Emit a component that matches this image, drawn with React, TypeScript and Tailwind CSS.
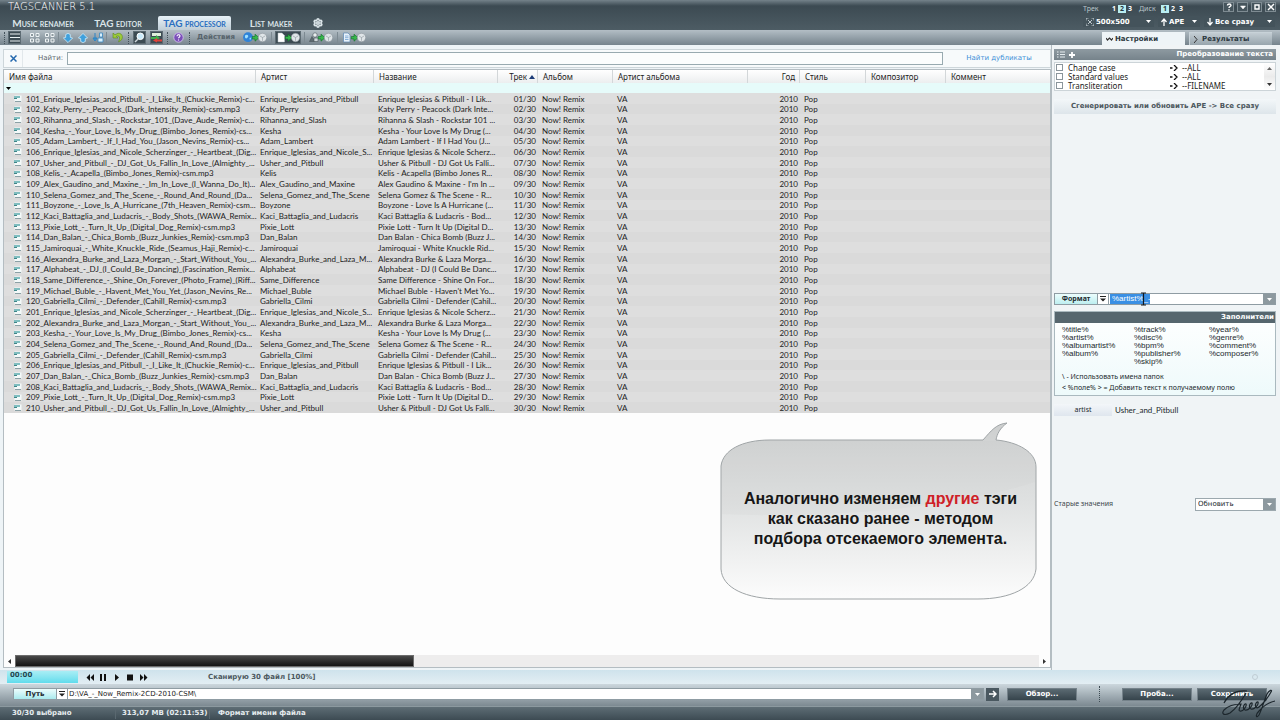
import type { ReactNode } from "react";
import { Settings } from "lucide-react";

const files: [string, string, string][] = [
  ["101_Enrique_Iglesias_and_Pitbull_-_I_Like_It_(Chuckie_Remix)-c...", "Enrique_Iglesias_and_Pitbull", "Enrique Iglesias & Pitbull - I Lik..."],
  ["102_Katy_Perry_-_Peacock_(Dark_Intensity_Remix)-csm.mp3", "Katy_Perry", "Katy Perry - Peacock (Dark Inte..."],
  ["103_Rihanna_and_Slash_-_Rockstar_101_(Dave_Aude_Remix)-c...", "Rihanna_and_Slash", "Rihanna & Slash - Rockstar 101 ..."],
  ["104_Kesha_-_Your_Love_Is_My_Drug_(Bimbo_Jones_Remix)-cs...", "Kesha", "Kesha - Your Love Is My Drug (..."],
  ["105_Adam_Lambert_-_If_I_Had_You_(Jason_Nevins_Remix)-cs...", "Adam_Lambert", "Adam Lambert - If I Had You (J..."],
  ["106_Enrique_Iglesias_and_Nicole_Scherzinger_-_Heartbeat_(Dig...", "Enrique_Iglesias_and_Nicole_S...", "Enrique Iglesias & Nicole Scherz..."],
  ["107_Usher_and_Pitbull_-_DJ_Got_Us_Fallin_In_Love_(Almighty_...", "Usher_and_Pitbull", "Usher & Pitbull - DJ Got Us Falli..."],
  ["108_Kelis_-_Acapella_(Bimbo_Jones_Remix)-csm.mp3", "Kelis", "Kelis - Acapella (Bimbo Jones R..."],
  ["109_Alex_Gaudino_and_Maxine_-_Im_In_Love_(I_Wanna_Do_It)...", "Alex_Gaudino_and_Maxine", "Alex Gaudino & Maxine - I'm In ..."],
  ["110_Selena_Gomez_and_The_Scene_-_Round_And_Round_(Da...", "Selena_Gomez_and_The_Scene", "Selena Gomez & The Scene - R..."],
  ["111_Boyzone_-_Love_Is_A_Hurricane_(7th_Heaven_Remix)-csm...", "Boyzone", "Boyzone - Love Is A Hurricane (..."],
  ["112_Kaci_Battaglia_and_Ludacris_-_Body_Shots_(WAWA_Remix...", "Kaci_Battaglia_and_Ludacris", "Kaci Battaglia & Ludacris - Bod..."],
  ["113_Pixie_Lott_-_Turn_It_Up_(Digital_Dog_Remix)-csm.mp3", "Pixie_Lott", "Pixie Lott - Turn It Up (Digital D..."],
  ["114_Dan_Balan_-_Chica_Bomb_(Buzz_Junkies_Remix)-csm.mp3", "Dan_Balan", "Dan Balan - Chica Bomb (Buzz J..."],
  ["115_Jamiroquai_-_White_Knuckle_Ride_(Seamus_Haji_Remix)-c...", "Jamiroquai", "Jamiroquai - White Knuckle Rid..."],
  ["116_Alexandra_Burke_and_Laza_Morgan_-_Start_Without_You_...", "Alexandra_Burke_and_Laza_M...", "Alexandra Burke & Laza Morga..."],
  ["117_Alphabeat_-_DJ_(I_Could_Be_Dancing)_(Fascination_Remix...", "Alphabeat", "Alphabeat - DJ (I Could Be Danc..."],
  ["118_Same_Difference_-_Shine_On_Forever_(Photo_Frame)_(Riff...", "Same_Difference", "Same Difference - Shine On For..."],
  ["119_Michael_Buble_-_Havent_Met_You_Yet_(Jason_Nevins_Re...", "Michael_Buble", "Michael Buble - Haven't Met Yo..."],
  ["120_Gabriella_Cilmi_-_Defender_(Cahill_Remix)-csm.mp3", "Gabriella_Cilmi", "Gabriella Cilmi - Defender (Cahil..."],
  ["201_Enrique_Iglesias_and_Nicole_Scherzinger_-_Heartbeat_(Dig...", "Enrique_Iglesias_and_Nicole_S...", "Enrique Iglesias & Nicole Scherz..."],
  ["202_Alexandra_Burke_and_Laza_Morgan_-_Start_Without_You_...", "Alexandra_Burke_and_Laza_M...", "Alexandra Burke & Laza Morga..."],
  ["203_Kesha_-_Your_Love_Is_My_Drug_(Bimbo_Jones_Remix)-cs...", "Kesha", "Kesha - Your Love Is My Drug (..."],
  ["204_Selena_Gomez_and_The_Scene_-_Round_And_Round_(Da...", "Selena_Gomez_and_The_Scene", "Selena Gomez & The Scene - R..."],
  ["205_Gabriella_Cilmi_-_Defender_(Cahill_Remix)-csm.mp3", "Gabriella_Cilmi", "Gabriella Cilmi - Defender (Cahil..."],
  ["206_Enrique_Iglesias_and_Pitbull_-_I_Like_It_(Chuckie_Remix)-c...", "Enrique_Iglesias_and_Pitbull", "Enrique Iglesias & Pitbull - I Lik..."],
  ["207_Dan_Balan_-_Chica_Bomb_(Buzz_Junkies_Remix)-csm.mp3", "Dan_Balan", "Dan Balan - Chica Bomb (Buzz J..."],
  ["208_Kaci_Battaglia_and_Ludacris_-_Body_Shots_(WAWA_Remix...", "Kaci_Battaglia_and_Ludacris", "Kaci Battaglia & Ludacris - Bod..."],
  ["209_Pixie_Lott_-_Turn_It_Up_(Digital_Dog_Remix)-csm.mp3", "Pixie_Lott", "Pixie Lott - Turn It Up (Digital D..."],
  ["210_Usher_and_Pitbull_-_DJ_Got_Us_Fallin_In_Love_(Almighty_...", "Usher_and_Pitbull", "Usher & Pitbull - DJ Got Us Falli..."],
];

const Caret = ({ className = "text-white" }: { className?: string }) => (
  <svg viewBox="0 0 5 3" className={`h-[3px] w-[5px] shrink-0 ${className}`} fill="currentColor">
    <path d="M0 0h5L2.5 3z" />
  </svg>
);

const Sep = () => <span className="h-3 w-px shrink-0 bg-[#7d8a92]" />;
const Dots = () => <span className="h-3 w-0 shrink-0 border-l border-dotted border-[#44525a]" />;

function Tool({ label, pressed, wide, children }: { label: string; pressed?: boolean; wide?: boolean; children: ReactNode }) {
  return (
    <button
      aria-label={label}
      className={`flex h-[13px] shrink-0 items-center justify-center ${wide ? "w-[26px]" : "w-[13px]"} ${pressed ? "border border-[#5d6b73] bg-[#3c4b53]" : ""}`}
    >
      {children}
    </button>
  );
}

const Grid = () => (
  <svg viewBox="0 0 10 10" className="h-[10px] w-[10px]" fill="#8c999f" stroke="#eef3f5" strokeWidth="1">
    <path d="M.5.5h3v3h-3zM6 .5h3v3H6zM.5 6h3v3h-3zM6 6h3v3H6z" />
  </svg>
);

const Diamond = ({ up }: { up?: boolean }) => (
  <svg viewBox="0 0 10 10" className="h-[10px] w-[10px]" fill="#3fa0dc" stroke="#cfeefc" strokeWidth=".8">
    <path d={up ? "M5 .4L9.600 5 7.300 5.600 7.300 8.500 5 9.600 2.700 8.500 2.700 5.600.4 5z" : "M5 9.600L.4 5 2.700 4.400 2.700 1.500 5 .4 7.300 1.500 7.300 4.400 9.600 5z"} />
  </svg>
);

function ToDisc({ source }: { source: "globe" | "page" | "shapes" | "doc" }) {
  return (
    <svg viewBox="0 0 24 11" className="h-[11px] w-6 shrink-0">
      {source === "globe" && (
        <g>
          <circle cx="5" cy="5.200" r="4.900" fill="#2f83d8" />
          <path d="M2 3.500c2-2 4 0 3 1.500s-2 2-3 .5zM6.500 6l2-.5L7 8.500z" fill="#9fe0ff" />
        </g>
      )}
      {source === "page" && <path d="M2 1h4l2.500 2.500V10H2z" fill="#fff" stroke="#b9c4c9" strokeWidth=".5" />}
      {source === "shapes" && (
        <g stroke="#4a555b" strokeWidth=".6">
          <circle cx="6" cy="3" r="2.200" fill="#e8edef" />
          <path d="M3 4.500L6 9.500H.5z" fill="#5d6a70" />
          <path d="M5 6h4v3.500H5z" fill="#cfd7da" />
        </g>
      )}
      {source === "doc" && (
        <g>
          <path d="M1.500 1h4.500l2 2v7H1.500z" fill="#e8f2fb" stroke="#5b87b3" strokeWidth=".7" />
          <path d="M3 4h3.500M3 5.700h3.500M3 7.500h3.500" stroke="#5b93c8" strokeWidth=".7" />
        </g>
      )}
      <path d="M9.300 4.500h2.700V2.200L16 5.700 12 9.200V7H9.300z" fill="#37b64c" stroke="#0f6d26" strokeWidth=".6" />
      <circle cx="19.500" cy="5.500" r="4.200" fill="#dfe5e8" stroke="#8b969c" strokeWidth=".6" />
      <path d="M17 4l2.500 1.500L22 4M19.500 5.500V8.800" stroke="#8b969c" strokeWidth=".6" fill="none" />
    </svg>
  );
}

function Toolbar() {
  return (
    <div className="flex h-[15px] items-center bg-linear-to-b from-[#b3bec5] to-[#76848d] px-1">
      <Dots />
      <div className="ml-[3px] flex items-center gap-[7px]">
        <Tool label="Список" pressed>
          <svg viewBox="0 0 10 9" className="h-[9px] w-[10px]" stroke="#e9f2f4" strokeWidth="1.200">
            <path d="M0 1h10M0 4.500h10M0 8h10" />
          </svg>
        </Tool>
        <Tool label="Плитка"><Grid /></Tool>
      </div>
      <div className="ml-[2px] flex items-center gap-[2px]">
        <Tool label="Эскизы"><Grid /></Tool>
        <Sep />
        <Tool label="Вниз"><Diamond /></Tool>
        <Tool label="Вверх"><Diamond up /></Tool>
        <Tool label="Сортировка">
          <svg viewBox="0 0 12 11" className="h-[11px] w-3">
            <path d="M3 1v6M1 6l2 3 2-3z" stroke="#2c84c6" fill="#3fa0dc" />
            <path d="M6 6h5v4H6zM7.500 1h3v4h-3z" fill="#d7effb" stroke="#3785bf" strokeWidth=".8" />
          </svg>
        </Tool>
        <Sep />
      </div>
      <div className="ml-1 flex items-center gap-1">
        <Tool label="Отменить">
          <svg viewBox="0 0 12 11" className="h-[11px] w-3">
            <path d="M1 1v5h5L4.300 4.300C7 3 9 5 6.500 9.800 12 8 11.500 1 6 1.200L3 2.800z" fill="#9dcb3b" stroke="#5a8a1a" strokeWidth=".6" />
          </svg>
        </Tool>
        <Dots />
        <Tool label="Поиск" pressed>
          <svg viewBox="0 0 11 11" className="h-[11px] w-[11px]">
            <path d="M4 7L1 10" stroke="#cfd8dc" strokeWidth="1.500" />
            <circle cx="6.300" cy="4.300" r="3.300" fill="#cbeafa" stroke="#fff" />
          </svg>
        </Tool>
        <Tool label="Сравнение" pressed>
          <svg viewBox="0 0 11 11" className="h-[11px] w-[11px]">
            <path d="M1 1h9v3H1z" fill="#dff0dc" />
            <path d="M0 5h5V3l4 3-4 2V7H0z" fill="#3fae4a" />
            <path d="M11 7.500H6V6L2 8.500l4 2V9.500h5z" fill="#e0423a" />
          </svg>
        </Tool>
        <Dots />
        <Tool label="Справка">
          <svg viewBox="0 0 11 11" className="h-[11px] w-[11px]">
            <circle cx="5.500" cy="5.500" r="4.700" fill="#7a4fb8" stroke="#d9c9f2" strokeWidth=".8" />
            <path d="M4 4.200c0-2 3-2 3-.2 0 1.200-1.500 1.200-1.500 2.300M5.500 7.400v1" stroke="#fff" strokeWidth="1.100" fill="none" />
          </svg>
        </Tool>
        <Dots />
        <span className="w-[48px] pl-[3px] text-[7px] font-bold text-[#56636b] [font-family:'DejaVu_Sans',sans-serif]">Действия</span>
      </div>
      <div className="flex items-center gap-[3px]">
        <Tool label="Из интернета" wide><ToDisc source="globe" /></Tool>
        <Sep />
        <Tool label="Из имени файла" wide pressed><ToDisc source="page" /></Tool>
        <Sep />
        <Tool label="Преобразовать" wide><ToDisc source="shapes" /></Tool>
        <Sep />
        <Tool label="Из списка" wide><ToDisc source="doc" /></Tool>
      </div>
    </div>
  );
}

const Digit = ({ on, children }: { on?: boolean; children: ReactNode }) => (
  <button className={`h-2 w-2 text-[7px] leading-2 font-bold ${on ? "bg-[#b9eef2] text-[#25343c]" : "text-white"}`}>{children}</button>
);

function WindowButton({ label, children }: { label: string; children: ReactNode }) {
  return (
    <button aria-label={label} className="flex h-[10px] w-[11px] items-center justify-center border border-[#7e8b92] bg-[#46555d]">
      <svg viewBox="0 0 8 8" className="h-2 w-2" fill="none" stroke="#fff" strokeWidth="1.400">{children}</svg>
    </button>
  );
}

function TopSelect({ label, value, width, icon }: { label: string; value: string; width: string; icon: ReactNode }) {
  return (
    <label className={`flex h-[11px] items-center gap-[2px] bg-[#44535b] px-[3px] ${width}`}>
      {icon}
      <select aria-label={label} className="min-w-0 flex-1 appearance-none bg-transparent text-[7px] leading-[10px] font-bold text-white [font-family:'DejaVu_Sans',sans-serif]">
        <option>{value}</option>
      </select>
      <Caret />
    </label>
  );
}

function Header() {
  return (
    <header className="flex h-[30px] justify-between bg-linear-to-b from-[#74828a] via-[#3c4a52] via-20% to-[#4d5c64]">
      <div className="flex flex-col pl-2">
        <h1 className="h-4 text-[10px] leading-[13px] font-light text-white [font-family:'DejaVu_Sans',sans-serif]">TAGSCANNER 5.1</h1>
        <nav className="flex h-[14px] text-[10px] leading-[14px] font-bold text-[#dbe4e8] [font-family:Lato,sans-serif]">
          <button className="w-[70px] [font-variant:small-caps]">Music renamer</button>
          <button className="w-20 [font-variant:small-caps]">TAG editor</button>
          <button className="w-[73px] rounded-t-[2px] bg-linear-to-b from-[#e8f2f8] to-[#bfcdd6] text-[#2b6fc0] [font-variant:small-caps]">TAG processor</button>
          <button className="w-20 [font-variant:small-caps]">List maker</button>
          <button aria-label="Настройки программы" className="flex w-[14px] items-center justify-center">
            <Settings className="h-[10px] w-[10px]" strokeWidth={4} />
          </button>
        </nav>
      </div>
      <div className="flex w-[197px] flex-col gap-[3px] pt-[2px]">
        <div className="flex h-[11px] justify-between pr-1">
          <div className="flex items-end text-[7px] leading-2 text-[#b9c4ca]">
            <span className="w-[27px]">Трек</span>
            <Digit>1</Digit><Digit on>2</Digit><Digit>3</Digit>
            <span className="w-[27px] pl-[5px]">Диск</span>
            <Digit on>1</Digit><Digit>2</Digit><Digit>3</Digit>
          </div>
          <div className="flex gap-[3px]">
            <WindowButton label="О программе"><path d="M2.500 2.500c0-2 3.500-2 3.500 0 0 1-2 1-2 2.500M4 6.200v1.300" /></WindowButton>
            <WindowButton label="Свернуть"><path d="M1.500 3h5L4 6z" fill="#fff" strokeWidth=".5" /></WindowButton>
            <WindowButton label="Развернуть"><path d="M2 2h4v4H2z" /></WindowButton>
            <WindowButton label="Закрыть"><path d="M1 1l6 6M7 1L1 7" /></WindowButton>
          </div>
        </div>
        <div className="flex gap-1">
          <TopSelect label="Размер обложки" value="500x500" width="w-[71px]" icon={
            <svg viewBox="0 0 8 8" className="h-2 w-2 shrink-0" stroke="#dbe4e8" strokeWidth=".8" fill="none"><path d="M0 2.500V0h2.500M5.500 0H8v2.500M8 5.500V8H5.500M2.500 8H0V5.500M2 2l4 4M6 2L2 6" /></svg>
          } />
          <TopSelect label="Тип тега" value="APE" width="w-[42px]" icon={
            <svg viewBox="0 0 6 8" className="h-2 w-[6px] shrink-0" stroke="#fff" strokeWidth="1.300" fill="none"><path d="M3 8V1M.5 4L3 1l2.500 3" /></svg>
          } />
          <TopSelect label="Теги" value="Все сразу" width="w-[71px]" icon={
            <svg viewBox="0 0 6 8" className="h-2 w-[6px] shrink-0" stroke="#fff" strokeWidth="1.300" fill="none"><path d="M3 0v7M.5 4L3 7l2.500-3" /></svg>
          } />
        </div>
      </div>
    </header>
  );
}

const th = "border-r border-[#d3d7d9] p-0 pl-[5px] text-left font-normal [font-family:'Noto_Sans',sans-serif]";

function FileTable() {
  return (
    <section className="flex min-h-0 flex-1 flex-col border border-[#b4bdc2] bg-[#fdfdfd]">
      <table className="w-full table-fixed border-separate border-spacing-0 text-[8px] leading-[10px] whitespace-nowrap text-[#1c1c1c] [font-family:Lato,sans-serif]">
        <colgroup>
          <col className="w-[252px]" /><col className="w-[118px]" /><col className="w-[124px]" /><col className="w-[40px]" />
          <col className="w-[75px]" /><col className="w-[135px]" /><col className="w-[52px]" /><col className="w-[66px]" />
          <col className="w-[80px]" /><col />
        </colgroup>
        <thead>
          <tr className="h-[13px] bg-linear-to-b from-white to-[#eceeef]">
            <th className={th}>Имя файла</th>
            <th className={th}>Артист</th>
            <th className={th}>Название</th>
            <th className={th}>
              <span className="flex items-center justify-end gap-[2px] pr-[2px]">
                Трек
                <svg viewBox="0 0 6 4" className="h-1 w-[6px]" fill="#1d3c78"><path d="M0 4h6L3 0z" /></svg>
              </span>
            </th>
            <th className={th}>Альбом</th>
            <th className={th}>Артист альбома</th>
            <th className="border-r border-[#d3d7d9] p-0 pr-1 text-right font-normal [font-family:'Noto_Sans',sans-serif]">Год</th>
            <th className={th}>Стиль</th>
            <th className={th}>Композитор</th>
            <th className="p-0 pl-[5px] text-left font-normal [font-family:'Noto_Sans',sans-serif]">Коммент</th>
          </tr>
        </thead>
        <tbody>
          <tr className="h-[10px] bg-[#e6fbfa]">
            <td colSpan={10} className="p-0 pl-[2px]"><Caret className="text-black" /></td>
          </tr>
          {files.map(([name, artist, title], i) => (
            <tr key={name} className={`${i % 3 === 1 ? "h-[10px]" : "h-[11px]"} ${i % 2 ? "bg-[#dadada]" : "bg-[#dedede]"}`}>
              <td className="p-0">
                <span className="flex items-center gap-1 pl-[10px]">
                  <svg viewBox="0 0 8 7" className="h-[7px] w-2 shrink-0">
                    <path d="M.5.5h7v6h-7z" fill="#f4fafa" />
                    <path d="M0 1h6v2H0z" fill="#7fbdbf" />
                    <path d="M0 3h3v1H0z" fill="#3d8688" />
                    <path d="M1 6.500h6" stroke="#8aa0a5" />
                  </svg>
                  {name}
                </span>
              </td>
              <td className="overflow-hidden p-0 pl-1">{artist}</td>
              <td className="overflow-hidden p-0 pl-1">{title}</td>
              <td className="p-0 pr-[2px] text-right">{String(i + 1).padStart(2, "0")}/30</td>
              <td className="p-0 pl-1">Now! Remix</td>
              <td className="p-0 pl-1">VA</td>
              <td className="p-0 pr-[2px] text-right">2010</td>
              <td className="p-0 pl-1">Pop</td>
              <td className="p-0" />
              <td className="p-0" />
            </tr>
          ))}
        </tbody>
      </table>
      <div className="mt-auto flex h-3 items-center gap-1 px-1">
        <svg viewBox="0 0 3 5" className="h-[5px] w-[3px]" fill="#333"><path d="M3 0v5L0 2.500z" /></svg>
        <div className="h-3 flex-1 bg-[#eeeded]">
          <div className="h-full w-[39%] border border-[#6d6d6d] bg-linear-to-b from-[#4a4a4a] to-[#141414]" />
        </div>
        <svg viewBox="0 0 3 5" className="h-[5px] w-[3px]" fill="#333"><path d="M0 0v5l3-2.500z" /></svg>
      </div>
    </section>
  );
}

function Callout() {
  return (
    <div className="absolute right-[14px] bottom-[70px] h-[178px] w-[317px]">
      <svg viewBox="0 0 317 178" className="absolute inset-0 h-full w-full">
        <defs>
          <linearGradient id="bubble" x1="0" y1="0" x2="0" y2="1">
            <stop offset="0" stopColor="#cdcfcf" />
            <stop offset=".45" stopColor="#dfe1e1" />
            <stop offset="1" stopColor="#fcfcfc" />
          </linearGradient>
        </defs>
        <path
          d="M50 18H263C271 9 276 2 287 1C280 6 277 12 276 18C298 20 316 30 316 45V147C314 166 290 177 258 177H60C26 177 2 166 1 147V44C3 28 22 18 50 18z"
          fill="url(#bubble)" stroke="#9fa4a6" strokeWidth="1"
        />
        <path d="M2 92C110 97 230 86 315 60V46C315 32 298 21 276 19H50C22 19 3 28 2 44z" fill="#c6caca" opacity=".15" />
      </svg>
      <p className="relative pt-[67px] pl-1 text-center text-[16px] leading-[20px] font-bold text-[#161616] [font-family:'Liberation_Sans',Arial,sans-serif]">
        Аналогично изменяем <span className="text-[#cf2027]">другие</span> тэги
        <br />как сказано ранее - методом
        <br />подбора отсекаемого элемента.
      </p>
    </div>
  );
}

const rules: [string, string][] = [["Change case", "--ALL"], ["Standard values", "--ALL"], ["Transliteration", "--FILENAME"]];
const tokens = [
  ["%title%", "%artist%", "%albumartist%", "%album%"],
  ["%track%", "%disc%", "%bpm%", "%publisher%", "%skip%"],
  ["%year%", "%genre%", "%comment%", "%composer%"],
];

function SidePanel() {
  return (
    <aside className="flex w-[229px] shrink-0 flex-col border-l border-[#b4bdc2] bg-[#f0f4f6] pt-1 pr-[4px] pl-[2px] text-[8px]">
      <div className="flex h-[11px] items-center gap-1 bg-linear-to-b from-[#8e9aa1] to-[#76838b] px-[3px] text-white">
        <svg viewBox="0 0 8 7" className="h-[7px] w-2" stroke="#e6ecef" strokeWidth="1"><path d="M0 1h1.500M3 1h5M0 3.500h1.500M3 3.500h5M0 6h1.500M3 6h5" /></svg>
        <button aria-label="Добавить">
          <svg viewBox="0 0 6 6" className="h-[6px] w-[6px]" stroke="#fff" strokeWidth="1.800"><path d="M3 0v6M0 3h6" /></svg>
        </button>
        <h2 className="ml-auto text-[7px] leading-[11px] font-bold [font-family:'DejaVu_Sans',sans-serif]">Преобразование текста</h2>
      </div>
      <div className="mt-[2px] flex border border-[#ccd4d8] bg-white">
        <div className="flex-1">
          {rules.map(([rule, target]) => (
            <div key={rule} className="flex h-[9px] items-center leading-[9px] text-[#1c1c1c]">
              <label className="flex w-[113px] items-center gap-[5px] pl-[1px]">
                <input type="checkbox" className="h-[7px] w-[7px] appearance-none border border-[#8a959b] bg-white" />
                {rule}
              </label>
              <svg viewBox="0 0 8 6" className="mr-[2px] h-[6px] w-3" fill="none" stroke="#111" strokeWidth="1.300"><path d="M0 3h2.500M4 0l3 3-3 3" /></svg>
              <span>{target}</span>
            </div>
          ))}
        </div>
        <div className="flex w-[11px] flex-col items-center justify-between bg-linear-to-b from-white via-[#ebebeb] to-white py-1">
          <svg viewBox="0 0 5 3" className="h-[3px] w-[5px]" fill="#666"><path d="M0 3h5L2.500 0z" /></svg>
          <Caret className="text-[#333]" />
        </div>
      </div>
      <button className="mt-2 h-[15px] bg-linear-to-b from-[#f3f7f9] to-[#dde5ea] text-[7px] font-bold text-[#4b565c] [font-family:'DejaVu_Sans',sans-serif]">
        Сгенерировать или обновить APE -&gt; Все сразу
      </button>
      <div className="relative mt-[179px] flex h-3 items-stretch border border-[#8f9ca3] bg-white">
        <button className="w-[42px] bg-linear-to-b from-[#ecfdfd] to-[#bdeef0] text-[7px] leading-[10px] font-bold text-[#1f2a2f]">Формат</button>
        <button aria-label="Форматы" className="flex w-3 items-center justify-center border-x border-[#8f9ca3]">
          <svg viewBox="0 0 6 6" className="h-[6px] w-[6px]" fill="#222"><path d="M0 0h6v1H0zM0 2.500h6L3 5.500z" /></svg>
        </button>
        <input aria-label="Строка формата" defaultValue="%artist%_-" className="ml-px w-[40px] bg-[#3a8fe4] pl-[2px] text-[8px] leading-[10px] text-white outline-none [font-family:'Liberation_Sans',sans-serif]" />
        <button aria-label="Раскрыть" className="ml-auto flex w-3 items-center justify-center bg-[#8d999f]"><Caret /></button>
        <svg viewBox="0 0 5 14" className="absolute top-[-2px] left-[86px] h-[14px] w-[5px]" stroke="#101820" strokeWidth="1.200"><path d="M0 1h5M2.500 1v12M0 13h5" /></svg>
      </div>
      <section className="mt-[6px] border border-[#aab9bf] bg-linear-to-b from-white to-[#eefafb] text-[#22292d]">
        <h2 className="h-[11px] bg-[#56666e] pr-px text-right text-[7px] leading-[11px] font-bold text-white [font-family:'DejaVu_Sans',sans-serif]">Заполнители</h2>
        <div className="grid h-[46px] grid-cols-[72px_75px_1fr] pt-[3px] pl-[7px] leading-2 [font-family:'Liberation_Sans',sans-serif]">
          {tokens.map((column) => (
            <ul key={column[0]}>
              {column.map((token) => <li key={token}>{token}</li>)}
            </ul>
          ))}
        </div>
        <div className="pt-[2px] pb-[2px] pl-[7px] text-[7px] leading-[11px]">
          <p>\ - Использовать имена папок</p>
          <p>&lt; %поле% &gt; = Добавить текст к получаемому полю</p>
        </div>
      </section>
      <div className="mt-2 flex h-3 items-center text-[#22292d]">
        <span className="w-[58px] bg-linear-to-b from-[#f3f6f9] to-[#dfe6ee] text-center text-[7px] leading-3">artist</span>
        <span className="pl-[3px] [font-family:Lato,sans-serif]">Usher_and_Pitbull</span>
      </div>
      <label className="mt-[82px] flex h-[13px] items-center justify-between text-[7px] text-[#3c464b]">
        Старые значения
        <span className="flex h-[13px] w-[81px] border border-[#9ca8ae] bg-white">
          <select className="min-w-0 flex-1 appearance-none bg-transparent pl-[2px] text-[7px] text-[#22292d] [font-family:'DejaVu_Sans',sans-serif]"><option>Обновить</option></select>
          <span className="flex w-3 items-center justify-center bg-[#8d999f]"><Caret /></span>
        </span>
      </label>
    </aside>
  );
}

function Player() {
  return (
    <div className="flex h-[14px] items-center bg-linear-to-b from-[#cfe3ec] to-[#e3eef3] pl-[7px] text-[#4d5960]">
      <div className="h-[12px] w-[71px] bg-linear-to-b from-[#a8eef5] to-[#5fdcec] pl-[3px] text-[7px] leading-[9px] font-bold text-[#1f4650] [font-family:'DejaVu_Sans',sans-serif]">00:00</div>
      <svg viewBox="0 0 62 7" className="ml-2 h-[7px] w-[62px]" fill="#111">
        <path d="M4 0v7L.5 3.500zM8 0v7L4.500 3.500zM14 0h2v7h-2zM18 0h2v7h-2zM29 0v7l4-3.500zM41 .5h6v6h-6zM54 0v7l3.500-3.500zM58 0v7l3.500-3.500z" />
      </svg>
      <span className="ml-[60px] text-[7px] font-bold [font-family:'DejaVu_Sans',sans-serif]">Сканирую 30 файл [100%]</span>
      <svg viewBox="0 0 8 8" className="mr-[21px] ml-auto h-2 w-2" fill="none" stroke="#c0cdd4"><circle cx="4" cy="4" r="2.500" /></svg>
    </div>
  );
}

function DarkButton({ children }: { children: ReactNode }) {
  return (
    <button className="h-[13px] w-[70px] border border-[#75828a] bg-linear-to-b from-[#5b6a72] to-[#36444c] text-[7px] leading-[11px] font-bold text-white [font-family:'DejaVu_Sans',sans-serif]">
      {children}
    </button>
  );
}

function PathRow() {
  return (
    <div className="flex h-[22px] items-center bg-linear-to-b from-[#ccd7dd] to-[#7c8991] pr-[13px] pb-[2px] pl-[13px]">
      <div className="flex h-3 flex-1 border border-[#8f9ca3] bg-white">
        <button className="w-[42px] bg-linear-to-b from-[#ecfdfd] to-[#a9eaee] text-[7px] leading-[10px] font-bold text-[#1f2a2f] [font-family:'DejaVu_Sans',sans-serif]">Путь</button>
        <button aria-label="Последние пути" className="flex w-3 items-center justify-center border-x border-[#8f9ca3]">
          <svg viewBox="0 0 6 6" className="h-[6px] w-[6px]" fill="#222"><path d="M0 0h6v1H0zM0 2.500h6L3 5.500z" /></svg>
        </button>
        <input aria-label="Путь" defaultValue="D:\VA_-_Now_Remix-2CD-2010-CSM\" className="min-w-0 flex-1 pl-px text-[7px] leading-[10px] text-[#1c1c1c] outline-none [font-family:'DejaVu_Sans',sans-serif]" />
        <button aria-label="Раскрыть" className="flex w-3 items-center justify-center bg-[#8d999f]"><Caret /></button>
      </div>
      <button aria-label="Перейти" className="ml-[2px] flex h-[13px] w-[13px] items-center justify-center bg-[#4a5860]">
        <svg viewBox="0 0 8 8" className="h-2 w-2" fill="none" stroke="#fff" strokeWidth="1.500"><path d="M0 4h7M4 1l3 3-3 3" /></svg>
      </button>
      <div className="ml-2 flex items-center">
        <DarkButton>Обзор...</DarkButton>
        <span className="mr-[22px] ml-[22px] h-4 border-l border-dotted border-[#3c4a52]" />
        <span className="flex gap-[5px]"><DarkButton>Проба...</DarkButton><DarkButton>Сохранить</DarkButton></span>
      </div>
    </div>
  );
}

export default function App() {
  return (
    <div className="relative flex min-h-screen flex-col bg-[#eef4f7] text-[8px] [font-family:'Noto_Sans',sans-serif]">
      <Header />
      <div className="relative">
        <Toolbar />
        <div className="absolute right-2 bottom-0 flex items-end gap-[4px] text-[7px] leading-3 font-bold text-[#2c383f] [font-family:'DejaVu_Sans',sans-serif]">
          <button className="flex h-[13px] w-[83px] items-center gap-[2px] bg-[#eef4f7] pl-1">
            <svg viewBox="0 0 7 4" className="h-1 w-[7px]" fill="none" stroke="#333" strokeWidth="1.200"><path d="M0 1l1.500 2L3.500 1l2 2L7 1" /></svg>
            Настройки
          </button>
          <button className="flex h-[13px] w-[83px] items-center gap-[4px] border-t border-l border-[#c8d2d8] bg-linear-to-b from-[#c3cdd3] to-[#98a5ad] pl-1">
            <svg viewBox="0 0 4 7" className="h-[7px] w-1" fill="none" stroke="#333"><path d="M0 0l3 3.500L0 7" /></svg>
            Результаты
          </button>
        </div>
      </div>
      <main className="flex flex-1 pl-[3px]">
        <div className="relative flex min-w-0 flex-1 flex-col pt-1 pb-[2px]">
          <div className="mb-px flex h-[19px] items-center border border-[#cdd6da] bg-[#f7fafb]">
            <button aria-label="Закрыть поиск" className="flex h-full w-[19px] items-center justify-center border-r border-[#e2e8eb]">
              <svg viewBox="0 0 7 7" className="h-[7px] w-[7px]" stroke="#2468ae" strokeWidth="1.500"><path d="M.5.5l6 6M6.500.5l-6 6" /></svg>
            </button>
            <label htmlFor="search" className="w-[44px] shrink-0 pl-[15px] text-[7px] text-[#5b666c] [font-family:'DejaVu_Sans',sans-serif]">Найти:</label>
            <input id="search" className="h-[13px] min-w-0 flex-1 border border-[#98aab0] bg-[#fbfdfd] outline-none" />
            <a href="#duplicates" className="w-[107px] shrink-0 pl-[5px] text-center text-[7px] text-[#3c8fd8] [font-family:'DejaVu_Sans',sans-serif]">Найти дубликаты</a>
          </div>
          <FileTable />
          <Callout />
        </div>
        <SidePanel />
      </main>
      <Player />
      <PathRow />
      <footer className="flex h-[14px] items-center border-t border-[#8c999f] bg-linear-to-b from-[#5e6d75] to-[#3d4b53] pl-3 text-[7px] font-bold text-[#e6ecef] [font-family:'DejaVu_Sans',sans-serif]">
        <span className="w-[104px] border-r border-[#5a6870]">30/30 выбрано</span>
        <span className="w-[94px] border-r border-[#5a6870] pl-[6px]">313,07 MB (02:11:53)</span>
        <span className="pl-2">Формат имени файла</span>
      </footer>
      <svg viewBox="0 0 56 34" className="pointer-events-none absolute right-1 bottom-0 h-[34px] w-14" fill="none" stroke="#1c262c" strokeWidth="1.200">
        <path d="M4 17C8 9 16 4 27 5M26 7C22 14 17 22 10 27C4 30 1 28 4 24C9 19 16 18 21 18C20 21 18 25 20 25C23 26 27 20 26 18C24 17 22 23 25 24C28 25 33 20 32 17C30 16 28 22 31 23C34 24 39 19 38 16C36 15 34 21 37 22C42 20 49 10 51 6C53 3 49 4 47 8C44 15 42 23 39 29C36 33 35 29 39 25C44 20 47 17 55 15" />
      </svg>
    </div>
  );
}
